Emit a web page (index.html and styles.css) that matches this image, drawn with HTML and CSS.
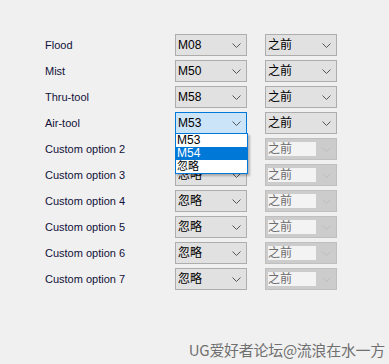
FILE: index.html
```html
<!DOCTYPE html>
<html lang="zh">
<head>
    <meta charset="UTF-8">
    <title>Coolant options</title>
    <link rel="stylesheet" href="styles.css">
</head>
<body>
    <div class="panel">
        <div class="grid">
            <span class="label">Flood</span>
            <div class="combo"><span class="value">M08</span><svg class="arrow" viewBox="0 0 9 5"><path d="M0.5 0.5 L4.5 4.5 L8.5 0.5"/></svg></div>
            <div class="combo"><span class="value">之前</span><svg class="arrow" viewBox="0 0 9 5"><path d="M0.5 0.5 L4.5 4.5 L8.5 0.5"/></svg></div>

            <span class="label">Mist</span>
            <div class="combo"><span class="value">M50</span><svg class="arrow" viewBox="0 0 9 5"><path d="M0.5 0.5 L4.5 4.5 L8.5 0.5"/></svg></div>
            <div class="combo"><span class="value">之前</span><svg class="arrow" viewBox="0 0 9 5"><path d="M0.5 0.5 L4.5 4.5 L8.5 0.5"/></svg></div>

            <span class="label">Thru-tool</span>
            <div class="combo"><span class="value">M58</span><svg class="arrow" viewBox="0 0 9 5"><path d="M0.5 0.5 L4.5 4.5 L8.5 0.5"/></svg></div>
            <div class="combo"><span class="value">之前</span><svg class="arrow" viewBox="0 0 9 5"><path d="M0.5 0.5 L4.5 4.5 L8.5 0.5"/></svg></div>

            <span class="label">Air-tool</span>
            <div class="combo focused">
                <span class="value">M53</span><svg class="arrow" viewBox="0 0 9 5"><path d="M0.5 0.5 L4.5 4.5 L8.5 0.5"/></svg>
                <ul class="dropdown">
                    <li>M53</li>
                    <li class="selected">M54</li>
                    <li>忽略</li>
                </ul>
            </div>
            <div class="combo"><span class="value">之前</span><svg class="arrow" viewBox="0 0 9 5"><path d="M0.5 0.5 L4.5 4.5 L8.5 0.5"/></svg></div>

            <span class="label">Custom option 2</span>
            <div class="combo"><span class="value">忽略</span><svg class="arrow" viewBox="0 0 9 5"><path d="M0.5 0.5 L4.5 4.5 L8.5 0.5"/></svg></div>
            <div class="combo disabled"><span class="value">之前</span><svg class="arrow" viewBox="0 0 9 5"><path d="M0.5 0.5 L4.5 4.5 L8.5 0.5"/></svg></div>

            <span class="label">Custom option 3</span>
            <div class="combo"><span class="value">忽略</span><svg class="arrow" viewBox="0 0 9 5"><path d="M0.5 0.5 L4.5 4.5 L8.5 0.5"/></svg></div>
            <div class="combo disabled"><span class="value">之前</span><svg class="arrow" viewBox="0 0 9 5"><path d="M0.5 0.5 L4.5 4.5 L8.5 0.5"/></svg></div>

            <span class="label">Custom option 4</span>
            <div class="combo"><span class="value">忽略</span><svg class="arrow" viewBox="0 0 9 5"><path d="M0.5 0.5 L4.5 4.5 L8.5 0.5"/></svg></div>
            <div class="combo disabled"><span class="value">之前</span><svg class="arrow" viewBox="0 0 9 5"><path d="M0.5 0.5 L4.5 4.5 L8.5 0.5"/></svg></div>

            <span class="label">Custom option 5</span>
            <div class="combo"><span class="value">忽略</span><svg class="arrow" viewBox="0 0 9 5"><path d="M0.5 0.5 L4.5 4.5 L8.5 0.5"/></svg></div>
            <div class="combo disabled"><span class="value">之前</span><svg class="arrow" viewBox="0 0 9 5"><path d="M0.5 0.5 L4.5 4.5 L8.5 0.5"/></svg></div>

            <span class="label">Custom option 6</span>
            <div class="combo"><span class="value">忽略</span><svg class="arrow" viewBox="0 0 9 5"><path d="M0.5 0.5 L4.5 4.5 L8.5 0.5"/></svg></div>
            <div class="combo disabled"><span class="value">之前</span><svg class="arrow" viewBox="0 0 9 5"><path d="M0.5 0.5 L4.5 4.5 L8.5 0.5"/></svg></div>

            <span class="label">Custom option 7</span>
            <div class="combo"><span class="value">忽略</span><svg class="arrow" viewBox="0 0 9 5"><path d="M0.5 0.5 L4.5 4.5 L8.5 0.5"/></svg></div>
            <div class="combo disabled"><span class="value">之前</span><svg class="arrow" viewBox="0 0 9 5"><path d="M0.5 0.5 L4.5 4.5 L8.5 0.5"/></svg></div>
        </div>
    </div>
    <div class="watermark">UG爱好者论坛@流浪在水一方</div>
</body>
</html>
```

FILE: styles.css
```css
body, html {
    margin: 0;
    padding: 0;
    width: 389px;
    height: 364px;
    background: #f0f0f0;
    font-family: 'Liberation Sans', 'Noto Sans CJK SC', sans-serif;
    overflow: hidden;
}
.panel {
    padding: 34px 0 0 45px;
}
.grid {
    display: grid;
    grid-template-columns: 112px 72px 72px;
    grid-auto-rows: 22px;
    column-gap: 18px;
    row-gap: 4px;
    align-items: center;
}
.label {
    font-size: 11px;
    color: #10103a;
}
.combo {
    position: relative;
    box-sizing: border-box;
    height: 22px;
    border: 1px solid #adadad;
    background: #e1e1e1;
    display: flex;
    align-items: center;
    justify-content: space-between;
    padding: 0 4px 0 2px;
}
.value {
    font-size: 12px;
    color: #000;
    line-height: 14px;
}
.arrow {
    width: 9px;
    height: 5px;
    margin-right: 1px;
    fill: none;
    stroke: #555;
    stroke-width: 1;
}
.combo.focused {
    border-color: #0078d7;
    background: #cce4f7;
}
.combo.disabled {
    background: #cccccc;
    border-color: #bfbfbf;
}
.combo.disabled .value {
    background: #f3f3f3;
    color: #6d6d6d;
    width: 48px;
    height: 14px;
}
.combo.disabled .arrow {
    stroke: #bcbcbc;
}
.dropdown {
    position: absolute;
    top: 20px;
    left: -1px;
    width: 73px;
    box-sizing: border-box;
    margin: 0;
    padding: 0;
    list-style: none;
    background: #fff;
    border: 1px solid #0078d7;
    box-shadow: 2px 2px 2px rgba(0, 0, 0, 0.25);
    z-index: 2;
}
.dropdown li {
    font-size: 12px;
    height: 13px;
    line-height: 13px;
    padding-left: 1px;
    color: #000;
    overflow: hidden;
}
.dropdown li:last-child {
    font-size: 11px;
}
.dropdown li.selected {
    background: #0078d7;
    color: #fff;
}
.watermark {
    position: absolute;
    right: 4px;
    bottom: 4px;
    font-family: 'Noto Sans CJK SC', sans-serif;
    font-size: 15px;
    color: #707070;
    letter-spacing: -0.3px;
}
```
